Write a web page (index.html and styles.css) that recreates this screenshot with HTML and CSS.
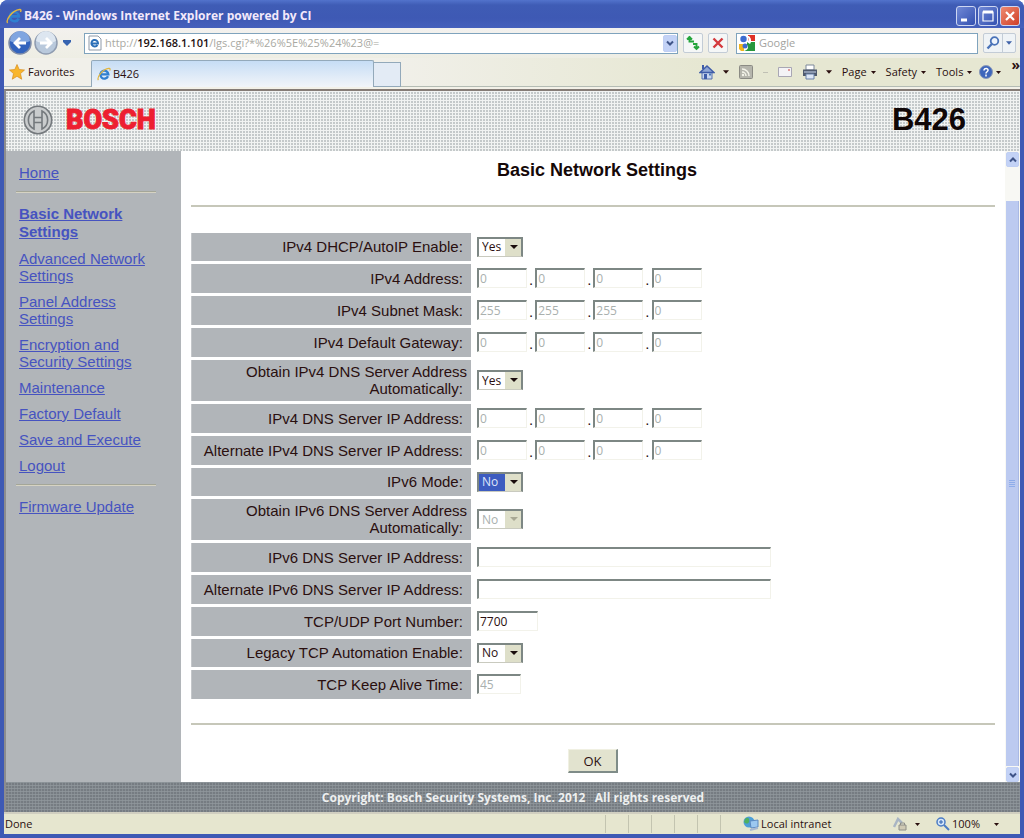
FILE: index.html
```html
<!DOCTYPE html>
<html lang="en">
<head>
<meta charset="utf-8">
<title>B426 - Windows Internet Explorer powered by CI</title>
<link rel="stylesheet" href="styles.css">
</head>
<body>
<svg class="defs" aria-hidden="true">
  <symbol id="ie" viewBox="0 0 16 16">
    <path d="M12.6 10.6A4.6 4.6 0 1 1 13 8.4H5" fill="none" stroke="#2f7fd0" stroke-width="2.6"/>
    <path d="M1.6 15C-.5 12 6 2.500 13.500 1.500c2-.2 1.500 1.500 1 2.500" fill="none" stroke="#e2b640" stroke-width="1.400"/>
  </symbol>
  <symbol id="chev" viewBox="0 0 8 8"><path d="M1 2.500 4 5.500 7 2.500" fill="none" stroke="#3f5488" stroke-width="2"/></symbol>
  <symbol id="tri" viewBox="0 0 7 4"><path d="M0 0h7L3.500 4z" fill="currentColor"/></symbol>
</svg>
<div class="window">
  <header class="titlebar">
    <svg class="i16"><use href="#ie"/></svg>
    <h1 class="caption">B426 - Windows Internet Explorer powered by CI</h1>
    <button class="win" aria-label="Minimize"><svg viewBox="0 0 18 18"><path d="M4 13h6" stroke="#fff" stroke-width="3"/></svg></button>
    <button class="win" aria-label="Maximize"><svg viewBox="0 0 18 18"><path d="M4 5h10v9H4z" fill="none" stroke="#fff" stroke-width="1.200"/><path d="M4 5h10" stroke="#fff" stroke-width="3"/></svg></button>
    <button class="win close" aria-label="Close"><svg viewBox="0 0 18 18"><path d="M5 5l8 8M13 5l-8 8" stroke="#fff" stroke-width="2.200"/></svg></button>
  </header>

  <div class="navbar">
    <div class="travel">
      <button class="plain" aria-label="Back"><svg class="i24" viewBox="0 0 24 24"><circle cx="12" cy="12" r="11" fill="#3263bd" stroke="#7e8ca8" stroke-width="1.500"/><path d="M2 10a10 10 0 0 1 20 0c-6 3-14 3-20 0z" fill="#7fa5e0"/><path d="M18 12H7m5-5-5 5 5 5" fill="none" stroke="#fff" stroke-width="2.800"/></svg></button>
      <button class="plain" aria-label="Forward"><svg class="i24" viewBox="0 0 24 24"><circle cx="12" cy="12" r="11" fill="#b9c9dc" stroke="#8f9cb0" stroke-width="1.500"/><path d="M2 10a10 10 0 0 1 20 0c-6 3-14 3-20 0z" fill="#dde6f0"/><path d="M6 12h11m-5-5 5 5-5 5" fill="none" stroke="#fff" stroke-width="2.800"/></svg></button>
      <button class="plain recent" aria-label="Recent pages"><svg viewBox="0 0 8 6"><path d="M0 0h8v2L4 6 0 2z" fill="#3563b0"/></svg></button>
    </div>
    <div class="address">
      <svg class="i16" viewBox="0 0 16 16"><path d="M2 1h9l3 3v11H2z" fill="#fff" stroke="#8d99a8"/><path d="M10.500 10A3.300 3.300 0 1 1 11 8.500H5" fill="none" stroke="#2b6fb8" stroke-width="2"/></svg>
      <span class="url">http://<b>192.168.1.101</b>/lgs.cgi?*%26%5E%25%24%23@=</span>
      <button class="drop" aria-label="Show addresses"><svg viewBox="0 0 8 8"><use href="#chev"/></svg></button>
    </div>
    <button class="tool" aria-label="Refresh"><svg class="i16" viewBox="0 0 16 16"><path d="M4.500 1v5.500H9M2 4.500 4.500 2 7 4.500M11.500 15V9H8M9 11.500l2.500 2.500 2.500-2.500" fill="none" stroke="#24a53c" stroke-width="1.900"/></svg></button>
    <button class="tool" aria-label="Stop"><svg class="i16" viewBox="0 0 16 16"><path d="M3.500 3.500l9 9M12.500 3.500l-9 9" stroke="#d43a3e" stroke-width="2.400"/></svg></button>
    <div class="search">
      <svg class="i16" viewBox="0 0 16 16"><path d="M0 0h16v16H0z" fill="#fff"/><path d="M9 0h7v6H9z" fill="#df3127"/><path d="M8 7h8v9H5c4-1 5-4 3-6z" fill="#27963c"/><path d="M0 9h5v7H2l-2-2z" fill="#f2b51c"/><circle cx="4.500" cy="4" r="3.200" fill="#3c6cd0"/><circle cx="6" cy="11" r="2.500" fill="#3c6cd0"/><path d="M8 1c2 2 2 5 0 6l3 2c2-3 1-6-1-8z" fill="#fff"/></svg>
      <input class="query" type="text" placeholder="Google" aria-label="Search">
    </div>
    <div class="go">
      <button class="plain" aria-label="Search"><svg class="i16" viewBox="0 0 16 16"><circle cx="9.500" cy="6" r="3.800" fill="#eef4fc" stroke="#4a73b8" stroke-width="1.800"/><path d="M6.800 9 2.500 13.500" stroke="#4a73b8" stroke-width="2.400"/></svg></button>
      <button class="plain split" aria-label="Search options"><svg class="tri blue"><use href="#tri"/></svg></button>
    </div>
  </div>

  <div class="tabbar">
    <button class="favorites"><svg class="i16" viewBox="0 0 16 16"><path d="M8 .5l2.200 5 5.300.5-4 3.600 1.200 5.600L8 12.300l-4.700 2.900 1.200-5.600-4-3.600L5.800 5.500z" fill="#f8b62d" stroke="#d98d1e" stroke-width=".7"/></svg>Favorites</button>
    <div class="tabs">
      <button class="tab"><svg class="i14"><use href="#ie"/></svg>B426</button>
      <button class="newtab" aria-label="New tab"></button>
    </div>
    <div class="commands">
      <button class="plain" aria-label="Home"><svg class="i16" viewBox="0 0 16 16"><path d="M3 8h10v7H3z" fill="#c9d6ee" stroke="#5471ae"/><path d="M1 8.500 8 2l7 6.500z" fill="#8fa6d4" stroke="#3f5ca8" stroke-width="1.500"/><path d="M3 1h2v4H3zM5 10h3v5H5z" fill="#3f5ca8"/><path d="M10 9.500h2v2h-2z" fill="#4c7bb8"/></svg><svg class="tri"><use href="#tri"/></svg></button>
      <button class="plain feed" aria-label="Feeds" disabled><svg class="i14" viewBox="0 0 14 14"><rect x=".5" y=".5" width="13" height="13" rx="1" fill="#b5b5ac" stroke="#8b8b84"/><path d="M3 7a4 4 0 0 1 4 4M3 4a7 7 0 0 1 7 7" fill="none" stroke="#f4f4ea" stroke-width="1.500"/><circle cx="4" cy="10" r="1.200" fill="#f4f4ea"/></svg><i class="dash"></i></button>
      <button class="plain" aria-label="Read mail"><svg class="mail" viewBox="0 0 14 10"><path d="M.5.5h13v9H.5z" fill="#f4f3f6" stroke="#a9a7b4"/><path d="M10 2h2v2h-2z" fill="#e09a9a"/></svg></button>
      <button class="plain" aria-label="Print"><svg class="i16" viewBox="0 0 16 16"><path d="M4 1h8v5H4z" fill="#fff" stroke="#7c889a"/><path d="M1 5.500h14V12H1z" fill="#4f5a6e"/><path d="M2 7h12v2H2z" fill="#8c99b0"/><path d="M4 10h8v5H4z" fill="#dce6f6" stroke="#6981a8"/></svg><svg class="tri"><use href="#tri"/></svg></button>
      <button class="plain">Page<svg class="tri sm"><use href="#tri"/></svg></button>
      <button class="plain">Safety<svg class="tri sm"><use href="#tri"/></svg></button>
      <button class="plain">Tools<svg class="tri sm"><use href="#tri"/></svg></button>
      <button class="plain help" aria-label="Help"><svg class="i14" viewBox="0 0 14 14"><circle cx="7" cy="7" r="6.500" fill="#3e66bb" stroke="#8c9ab8"/><path d="M5 5.500c0-3 4.500-2.500 4 0C8.800 6.800 7 6.800 7 8.500M7 9.500v2" fill="none" stroke="#fff" stroke-width="1.500"/></svg><svg class="tri sm"><use href="#tri"/></svg></button>
      <button class="plain more" aria-label="More commands">»</button>
    </div>
  </div>

  <div class="page">
    <div class="banner">
      <svg class="emblem" viewBox="0 0 30 30"><circle cx="15" cy="15" r="14" fill="#c9cccd"/><g fill="none" stroke="#74797d" stroke-width="1.600"><circle cx="15" cy="15" r="13.700"/><path d="M11 6a10 10 0 0 0 0 18zM19 6a10 10 0 0 1 0 18zM11 12.500h8M11 17.500h8"/></g></svg>
      <span class="brand">BOSCH</span>
      <span class="model">B426</span>
    </div>
    <div class="body">
      <nav class="side">
        <a href="#">Home</a>
        <hr>
        <a class="current" href="#">Basic Network Settings</a>
        <a href="#">Advanced Network Settings</a>
        <a href="#">Panel Address Settings</a>
        <a href="#">Encryption and Security Settings</a>
        <a href="#">Maintenance</a>
        <a href="#">Factory Default</a>
        <a href="#">Save and Execute</a>
        <a href="#">Logout</a>
        <hr>
        <a href="#">Firmware Update</a>
      </nav>
      <main class="content">
        <h2 class="heading">Basic Network Settings</h2>
        <form class="settings">
          <table class="grid">
            <tr class="short"><th><label for="dhcp">IPv4 DHCP/AutoIP Enable:&nbsp;</label></th><td><span class="pick"><select id="dhcp"><option>Yes</option><option>No</option></select></span></td></tr>
            <tr><th><label for="a1">IPv4 Address:&nbsp;</label></th><td><div class="ip"><input id="a1" value="0" disabled>.<input aria-label="Octet 2" value="0" disabled>.<input aria-label="Octet 3" value="0" disabled>.<input aria-label="Octet 4" value="0" disabled></div></td></tr>
            <tr><th><label for="m1">IPv4 Subnet Mask:&nbsp;</label></th><td><div class="ip"><input id="m1" value="255" disabled>.<input aria-label="Octet 2" value="255" disabled>.<input aria-label="Octet 3" value="255" disabled>.<input aria-label="Octet 4" value="0" disabled></div></td></tr>
            <tr><th><label for="g1">IPv4 Default Gateway:&nbsp;</label></th><td><div class="ip"><input id="g1" value="0" disabled>.<input aria-label="Octet 2" value="0" disabled>.<input aria-label="Octet 3" value="0" disabled>.<input aria-label="Octet 4" value="0" disabled></div></td></tr>
            <tr class="tall"><th><label for="dns4">Obtain IPv4 DNS Server Address Automatically:&nbsp;</label></th><td><span class="pick"><select id="dns4"><option>Yes</option><option>No</option></select></span></td></tr>
            <tr><th><label for="d1">IPv4 DNS Server IP Address:&nbsp;</label></th><td><div class="ip"><input id="d1" value="0" disabled>.<input aria-label="Octet 2" value="0" disabled>.<input aria-label="Octet 3" value="0" disabled>.<input aria-label="Octet 4" value="0" disabled></div></td></tr>
            <tr><th><label for="e1">Alternate IPv4 DNS Server IP Address:&nbsp;</label></th><td><div class="ip"><input id="e1" value="0" disabled>.<input aria-label="Octet 2" value="0" disabled>.<input aria-label="Octet 3" value="0" disabled>.<input aria-label="Octet 4" value="0" disabled></div></td></tr>
            <tr class="short"><th><label for="v6">IPv6 Mode:&nbsp;</label></th><td><span class="pick chosen"><select id="v6"><option>No</option><option>Yes</option></select></span></td></tr>
            <tr class="tall"><th><label for="dns6">Obtain IPv6 DNS Server Address Automatically:&nbsp;</label></th><td><span class="pick off"><select id="dns6" disabled><option>No</option></select></span></td></tr>
            <tr><th><label for="p6">IPv6 DNS Server IP Address:&nbsp;</label></th><td><input class="wide" id="p6" disabled></td></tr>
            <tr><th><label for="q6">Alternate IPv6 DNS Server IP Address:&nbsp;</label></th><td><input class="wide" id="q6" disabled></td></tr>
            <tr><th><label for="port">TCP/UDP Port Number:&nbsp;</label></th><td><input class="port" id="port" value="7700"></td></tr>
            <tr class="short"><th><label for="legacy">Legacy TCP Automation Enable:&nbsp;</label></th><td><span class="pick"><select id="legacy"><option>No</option><option>Yes</option></select></span></td></tr>
            <tr><th><label for="keep">TCP Keep Alive Time:&nbsp;</label></th><td><input class="keep" id="keep" value="45" disabled></td></tr>
          </table>
          <div class="actions"><button class="ok" type="submit">OK</button></div>
        </form>
      </main>
      <div class="scroll">
        <button class="drop" aria-label="Scroll up"><svg class="up" viewBox="0 0 8 8"><use href="#chev"/></svg></button>
        <div class="thumb"><svg viewBox="0 0 6 8"><path d="M0 .5h6M0 2.500h6M0 4.500h6M0 6.500h6" stroke="#8fadea"/></svg></div>
        <button class="drop" aria-label="Scroll down"><svg viewBox="0 0 8 8"><use href="#chev"/></svg></button>
      </div>
    </div>
    <footer class="copyright">Copyright: Bosch Security Systems, Inc. 2012 &nbsp; All rights reserved</footer>
  </div>

  <div class="status">
    <span class="done">Done</span>
    <i class="cell"></i><i class="cell"></i><i class="cell"></i><i class="cell"></i><i class="cell"></i><i class="cell"></i>
    <span class="zone"><svg class="i16" viewBox="0 0 16 16"><circle cx="6" cy="6" r="5.500" fill="#4d9fd8"/><path d="M2 3c3-3 5 0 4 3-1 2-3 2-5 0z" fill="#4fb061"/><path d="M7 5l8-1v7l-7 1z" fill="#9cc8f0" stroke="#5a88c0"/><path d="M7 14l8-2" stroke="#a8b8d0" stroke-width="2"/></svg>Local intranet</span>
    <button class="plain protect" aria-label="Protected mode"><svg class="i14" viewBox="0 0 14 14"><path d="M1 10 5 2l4 4" fill="none" stroke="#a9b5c4" stroke-width="2.500"/><path d="M6 8h7v5H6z" fill="#cfc9b4" stroke="#8e8e88"/><path d="M7.500 8V6h4v2" fill="none" stroke="#8e8e88"/></svg><svg class="tri sm"><use href="#tri"/></svg></button>
    <button class="plain zoom"><svg class="i14" viewBox="0 0 14 14"><circle cx="5" cy="5" r="4" fill="#d6e6fa" stroke="#4c7cc4" stroke-width="1.500"/><path d="M3 5h4M5 3v4" stroke="#2d60b0"/><path d="M8 8l5 5" stroke="#4c7cc4" stroke-width="2"/></svg>100%<svg class="tri sm"><use href="#tri"/></svg></button>
  </div>
</div>
</body>
</html>
```
FILE: styles.css
```css
* { box-sizing: border-box; }

body {
  margin: 0;
  background: #fff;
  color: #2a0f0f;
  font: 11px/14px "Open Sans", "Noto Sans", sans-serif;
}

button, input, select { font: inherit; color: inherit; margin: 0; }
button { padding: 0; border: 0; background: none; }
.defs { display: none; }
svg { display: block; flex: none; }
.i14 { width: 14px; height: 14px; }
.i16 { width: 16px; height: 16px; }
.i24 { width: 24px; height: 24px; }
.tri { width: 6px; height: 4px; }
.tri.sm { width: 5px; height: 3px; }
.tri.blue { color: #3f62a8; }
.plain { display: flex; align-items: center; gap: 4px; }

.window {
  display: flex;
  flex-direction: column;
  min-height: 100vh;
  padding: 0 4px 4px;
  background: #3e59b4;
  border-radius: 8px 8px 0 0;
}

.titlebar {
  display: flex;
  align-items: center;
  gap: 2px;
  height: 28px;
  margin: 0 -4px;
  padding: 3px 4px 0 6px;
  background: linear-gradient(#5273cc, #3f5cb5 5px, #3e59b4 18px, #4560bc);
  border-radius: 8px 8px 0 0;
}
.caption {
  flex: 1;
  margin: 0;
  color: #f3e9fb;
  font: bold 12px/16px "Open Sans", sans-serif;
}
.win {
  width: 20px;
  height: 20px;
  border: 1px solid #cdd6f2;
  border-radius: 3px;
  background: linear-gradient(135deg, #7189d6, #3350b0);
}
.win.close { background: linear-gradient(135deg, #ee8a70, #cf3f28); }

.navbar {
  display: flex;
  align-items: center;
  gap: 5px;
  height: 30px;
  padding: 0 4px;
  background: linear-gradient(#f3f1ee, #eeeee4);
}
.travel { display: flex; align-items: center; gap: 2px; width: 71px; }
.recent svg { width: 8px; height: 6px; margin-left: 3px; }
.address, .search {
  display: flex;
  align-items: center;
  gap: 4px;
  height: 21px;
  border: 1px solid #7fa3bd;
  background: #fff;
}
.address { flex: 1; gap: 2px; padding-left: 2px; }
.search { width: 242px; margin-left: 3px; padding-left: 2px; }
.url { flex: 1; color: #a9a9a2; }
.url b { color: #1c1010; font-weight: 600; }
.drop {
  display: grid;
  place-items: center;
  width: 14px;
  height: 17px;
  border: 1px solid #c0cff3;
  border-radius: 2px;
  background: #c3d2f6;
}
.drop svg { width: 8px; height: 8px; }
.up { transform: rotate(180deg); }
.tool {
  display: grid;
  place-items: center;
  width: 20px;
  height: 20px;
  border: 1px solid #c3ccd6;
  border-radius: 2px;
  background: #f5f7f7;
}
.query { flex: 1; min-width: 0; border: 0; padding: 0; background: none; }
.query::placeholder { color: #a3a3a0; opacity: 1; }
.go { display: flex; height: 20px; border: 1px solid #c3ccd6; border-radius: 2px; background: #eff3f6; }
.go .plain { padding: 0 1px; }
.go .split { padding: 0 3px; border-left: 1px solid #c3ccd6; }

.tabbar {
  display: flex;
  height: 31px;
  border-bottom: 2px solid #f3f1e8;
  background: linear-gradient(90deg, #f1f0ea 380px, #e6e7d2 700px);
}
.favorites {
  display: flex;
  align-items: center;
  gap: 3px;
  width: 87px;
  padding: 0 5px;
  border-bottom: 1px solid #a3b3bd;
}
.tabs { display: flex; align-items: flex-end; }
.tab {
  display: flex;
  align-items: center;
  gap: 2px;
  width: 283px;
  height: 27px;
  padding: 0 5px;
  border: 1px solid #93a9ba;
  border-bottom: 0;
  border-radius: 2px 2px 0 0;
  background: linear-gradient(#c6ddf5, #f2f5f9);
}
.newtab { width: 27px; height: 25px; border: 1px solid #93a9ba; border-left: 0; background: #e3ebf5; }
.commands {
  display: flex;
  flex: 1;
  align-items: center;
  justify-content: flex-end;
  gap: 10px;
  border-bottom: 1px solid #b4bcb4;
}
.commands .plain:first-child, .commands .plain:nth-child(4) { gap: 8px; }
.feed { gap: 10px; }
.dash { width: 5px; height: 1px; background: #c0c0b4; }
.mail { width: 14px; height: 10px; }
.help { gap: 3px; margin-left: -3px; }
.more { align-self: flex-start; font-weight: bold; font-size: 14px; }

.page {
  display: flex;
  flex: 1;
  flex-direction: column;
  border-top: 2px solid #857c76;
  border-left: 2px solid #8c8c8e;
  background: #fff;
  font-family: "Liberation Sans", Arial, sans-serif;
}
.banner {
  display: flex;
  align-items: center;
  gap: 13px;
  height: 60px;
  padding: 0 54px 2px 17px;
  background:
    repeating-linear-gradient(90deg, transparent 0 2px, #f1f3f2 2px 3px),
    repeating-linear-gradient(#f1f3f2 0 1px, #c4c9ca 1px 3px);
}
.emblem { width: 30px; height: 30px; }
.brand {
  flex: 1;
  color: #ed1f30;
  font: 900 27px/32px Roboto, sans-serif;
  -webkit-text-stroke: 1px #ed1f30;
}
.model { color: #100707; font: bold 31px/36px "Liberation Sans", Arial, sans-serif; }

.body { display: flex; flex: 1; }
.side {
  display: flex;
  flex-direction: column;
  align-items: flex-start;
  gap: 9px;
  width: 175px;
  padding: 13px 24px 0 13px;
  background: #b1b5b9;
  font-size: 15px;
  line-height: 17px;
}
.side a { color: #4653c0; }
.side .current { font-weight: bold; line-height: 18px; }
.side hr {
  width: 140px;
  height: 2px;
  margin: 1px 0 3px -3px;
  border: 0;
  border-top: 1px solid #a4a698;
  background: #d6d3c3;
}

.content { flex: 1; padding: 8px 10px 0; }
.heading {
  margin: 0;
  padding: 0 0 24px 8px;
  border-bottom: 2px solid #c6c7b9;
  font-size: 18px;
  line-height: 22px;
  text-align: center;
  color: #150808;
}
.settings { display: flex; flex-direction: column; }
.grid { margin-top: 23px; border-spacing: 0 3px; font-size: 15px; line-height: 17px; }
.grid tr { height: 29px; }
.grid .short { height: 28px; }
.grid .tall { height: 41px; }
.grid th {
  width: 280px;
  padding: 0 4px 1px 8px;
  background: #b1b5b9;
  border-left: 1px solid #c4c7ca;
  font-weight: normal;
  text-align: right;
}
.grid td { padding: 0 0 1px 6px; }
.grid input {
  display: block;
  height: 20px;
  padding: 0 1px;
  border: 1px solid #f2f2ea;
  border-top: 2px solid #7d8784;
  border-left: 2px solid #7d8784;
  background: #fff;
  font: 12px/16px "Open Sans", "Noto Sans", sans-serif;
}
.grid input:disabled { color: #a9b0ae; }
.ip { display: flex; align-items: flex-end; gap: 2px; }
.grid .ip input { width: 50px; }
.grid .wide { width: 294px; }
.grid .port { width: 61px; }
.grid .keep { width: 44px; }

.pick { position: relative; display: block; width: 46px; height: 20px; }
.pick select {
  display: block;
  width: 100%;
  height: 100%;
  padding: 0 16px 0 3px;
  appearance: none;
  border: 2px solid #7d8784;
  border-bottom: 1px solid #c9cabf;
  border-radius: 0;
  background: linear-gradient(90deg, #fff 26px, #dedfc9 26px);
  font: 12px/16px "Open Sans", "Noto Sans", sans-serif;
}
.pick::after {
  content: "";
  position: absolute;
  right: 5px;
  top: 8px;
  border: 4px solid transparent;
  border-top-color: #1a0c0c;
  border-bottom: 0;
  pointer-events: none;
}
.chosen select { background: linear-gradient(90deg, #3d5cc0 26px, #dedfc9 26px); color: #dfe6fb; }
.off select { color: #a9b0ae; opacity: 1; }
.off::after { border-top-color: #a8a894; }

.actions {
  display: flex;
  justify-content: center;
  margin-top: 21px;
  padding: 24px 0 8px;
  border-top: 2px solid #c6c7b9;
}
.ok {
  width: 50px;
  height: 24px;
  border: 1px solid #f0f0e2;
  border-right: 2px solid #7f8c88;
  border-bottom: 2px solid #7f8c88;
  background: #e2e3cf;
  font: 13px/18px "Open Sans", "Noto Sans", sans-serif;
}

.scroll {
  display: flex;
  flex-direction: column;
  width: 15px;
  padding: 1px 1px 0;
  background: #f8f8f4;
}
.scroll .drop { width: 13px; height: 15px; }
.thumb {
  display: grid;
  flex: 1;
  place-items: center;
  margin: 34px 0 1px;
  border-right: 1px solid #a9b9e4;
  background: #bccaf0;
}
.thumb svg { width: 6px; height: 8px; }

.copyright {
  padding: 9px 0 7px;
  background:
    repeating-linear-gradient(90deg, transparent 0 2px, rgba(145, 152, 157, .6) 2px 3px),
    repeating-linear-gradient(#8b9297 0 1px, #767c82 1px 3px);
  color: #eef0f0;
  font: bold 12px/14px "Open Sans", sans-serif;
  text-align: center;
}

.status {
  display: flex;
  align-items: center;
  height: 22px;
  border-top: 2px solid #d0cec0;
  background: #e6e6cf;
}
.done { flex: 1; padding-left: 1px; }
.cell { width: 23px; height: 18px; border-left: 1px solid #c3c4b0; }
.zone { display: flex; align-items: center; gap: 2px; width: 150px; }
.protect { gap: 8px; width: 43px; }
.zoom { gap: 2px; padding-right: 21px; }
.zoom .tri { margin-left: 12px; }
```
